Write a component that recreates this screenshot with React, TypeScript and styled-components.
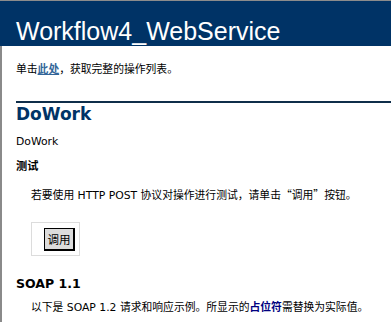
import React from "react";
import styled, { createGlobalStyle } from "styled-components";

const Global = createGlobalStyle`
  html, body { margin: 0; padding: 0; background: #ffffff; }
  body { font-family: "DejaVu Sans", Verdana, "Noto Sans CJK SC", sans-serif; }
`;

const Page = styled.div`
  width: 391px;
  height: 322px;
  overflow: hidden;
  border-top: 1px solid #8c8c8c;
  box-sizing: border-box;
  display: flex;
  flex-direction: column;
`;

const Header = styled.div`
  height: 45px;
  background: #003366;
  color: #ffffff;
  display: flex;
  align-items: flex-end;
  padding-left: 16px;
  box-sizing: border-box;
`;

const Title = styled.h1`
  margin: 0;
  font-family: "Liberation Sans", Arial, "Noto Sans CJK SC", sans-serif;
  font-weight: normal;
  font-size: 25px;
  line-height: 30px;
  white-space: nowrap;
`;

const Content = styled.div`
  flex: 1;
  border-left: 2px solid #8a8a8a;
  padding-left: 14px;
  color: #000000;
  font-size: 10.8px;
  font-family: "DejaVu Sans", "Noto Sans CJK SC", sans-serif;
`;

const Text = styled.p<{ $indent?: boolean; $top: number }>`
  margin: ${(p) => p.$top}px 0 0 ${(p) => (p.$indent ? 15 : 0)}px;
  line-height: 15px;
  white-space: nowrap;
`;

const Cjk = styled.span`
  font-family: "Noto Sans CJK SC", sans-serif;
`;

const Link = styled.a`
  color: #336699;
  font-weight: bold;
  text-decoration: underline;
`;

const Rule = styled.div`
  margin-top: 24px;
  height: 2px;
  background: #0f2e4a;
`;

const H2 = styled.h2`
  margin: 0;
  font-size: 17px;
  line-height: 22px;
  font-weight: bold;
  color: #003366;
`;

const H3 = styled.h3<{ $size: number; $top: number }>`
  margin: ${(p) => p.$top}px 0 0 0;
  font-size: ${(p) => p.$size}px;
  line-height: 16px;
  font-weight: bold;
`;

const Frame = styled.div`
  margin: 19px 0 0 15px;
  width: 49px;
  height: 34px;
  box-sizing: border-box;
  border: 1px solid #dcdcdc;
  display: flex;
  align-items: center;
  justify-content: flex-end;
  padding-right: 4px;
`;

const Button = styled.button`
  width: 31px;
  height: 23px;
  box-sizing: border-box;
  border: 1px solid #000000;
  border-right-width: 2px;
  border-bottom-width: 2px;
  background: #dcdcdc;
  font-family: "Noto Sans CJK SC", sans-serif;
  font-size: 11.5px;
  padding: 0;
  color: #000;
`;

const Em = styled.span`
  color: #000080;
  font-weight: bold;
`;

export default function App() {
  return (
    <>
      <Global />
      <Page>
        <Header>
          <Title>Workflow4_WebService</Title>
        </Header>
        <Content>
          <Text $top={16}>
            单击<Link href="#">此处</Link>，获取完整的操作列表。
          </Text>
          <Rule />
          <H2>DoWork</H2>
          <Text $top={9}>DoWork</Text>
          <H3 $size={11.2} $top={10}>测试</H3>
          <Text $top={12} $indent>
            若要使用 HTTP POST 协议对操作进行测试，请单击<Cjk>“</Cjk>调用<Cjk>”</Cjk>按钮。
          </Text>
          <Frame>
            <Button>调用</Button>
          </Frame>
          <H3 $size={12.5} $top={20}>SOAP 1.1</H3>
          <Text $top={8} $indent>
            以下是 SOAP 1.2 请求和响应示例。所显示的<Em>占位符</Em>需替换为实际值。
          </Text>
        </Content>
      </Page>
    </>
  );
}
